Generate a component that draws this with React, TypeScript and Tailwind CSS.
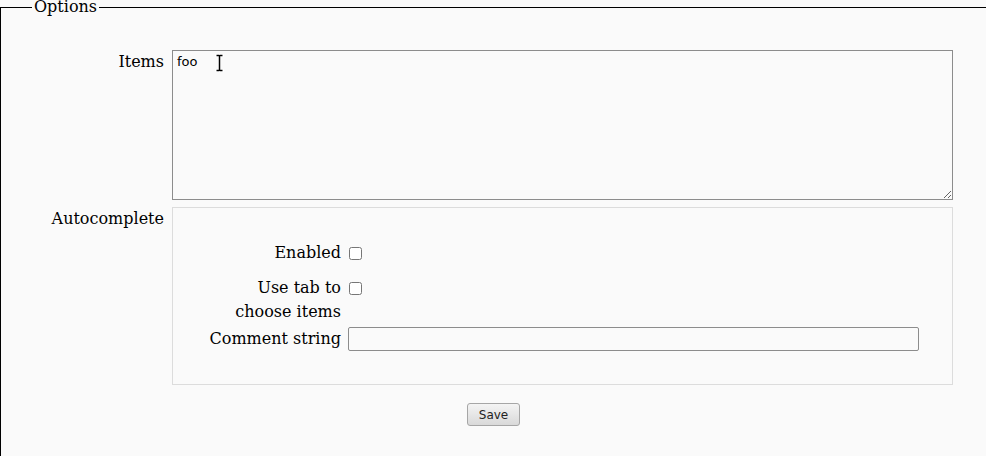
export default function App() {
  return (
    <div className="h-screen bg-[#fafafa] text-black font-['DejaVu_Serif',serif] text-base overflow-hidden">
      <fieldset className="h-[456px] border border-r-0 border-b-0 border-black">
        <legend className="ml-[31px] px-[2px] leading-[14px]">Options</legend>

        <div className="flex flex-col pt-[36px]">
          {/* Items */}
          <div className="flex">
            <label className="w-[163px] text-right leading-6">Items</label>
            <div className="relative ml-[8px]">
              <textarea
                defaultValue="foo"
                spellCheck
                className="block w-[781px] h-[150px] border border-[#8c8c8c] bg-transparent px-[4px] pt-[3px] font-['DejaVu_Sans',sans-serif] text-[13px] leading-[15px] outline-none"
              />
              {/* mouse I-beam */}
              <svg className="absolute left-[43px] top-[4px] w-[9px] h-[18px] pointer-events-none" viewBox="0 0 9 18">
                <path d="M1.5 1.5h2.3l.7.8.7-.8h2.3M4.5 2.3v13.4M1.5 16.5h2.3l.7-.8.7.8h2.3" fill="none" stroke="#fff" strokeWidth={3.2} strokeLinecap="round" />
                <path d="M1.5 1.5h2.3l.7.8.7-.8h2.3M4.5 2.3v13.4M1.5 16.5h2.3l.7-.8.7.8h2.3" fill="none" stroke="#000" strokeWidth={1.5} />
              </svg>
            </div>
          </div>

          {/* Autocomplete */}
          <div className="flex mt-[7px]">
            <label className="w-[163px] text-right leading-6">Autocomplete</label>
            <div className="ml-[8px] w-[781px] h-[178px] border border-[#dcdcdc] pl-[35px] pt-[33px] flex flex-col">
              <div className="flex">
                <span className="w-[133px] text-right leading-6">Enabled</span>
                <input type="checkbox" className="ml-[8px] mt-[6px] w-[13px] h-[13px] m-0" />
              </div>
              <div className="flex mt-[11px]">
                <span className="w-[133px] text-right leading-6">
                  Use tab to
                  <br />
                  choose items
                </span>
                <input type="checkbox" className="ml-[8px] mt-[6px] w-[13px] h-[13px] m-0" />
              </div>
              <div className="flex mt-[3px]">
                <span className="w-[133px] text-right leading-6 whitespace-nowrap">Comment string</span>
                <input
                  type="text"
                  className="ml-[7px] w-[571px] h-[24px] border border-[#8c8c8c] rounded-[2px] bg-transparent px-[3px] font-['DejaVu_Sans',sans-serif] text-[13px] outline-none"
                />
              </div>
            </div>
          </div>

          {/* Save */}
          <div className="flex justify-center mt-[18px]">
            <button className="w-[53px] h-[23px] border border-[#a6a6a6] rounded-[3px] bg-gradient-to-b from-[#f4f4f4] to-[#d9d9d9] font-['DejaVu_Sans',sans-serif] text-[12px] text-[#222]">
              Save
            </button>
          </div>
        </div>
      </fieldset>
    </div>
  );
}
